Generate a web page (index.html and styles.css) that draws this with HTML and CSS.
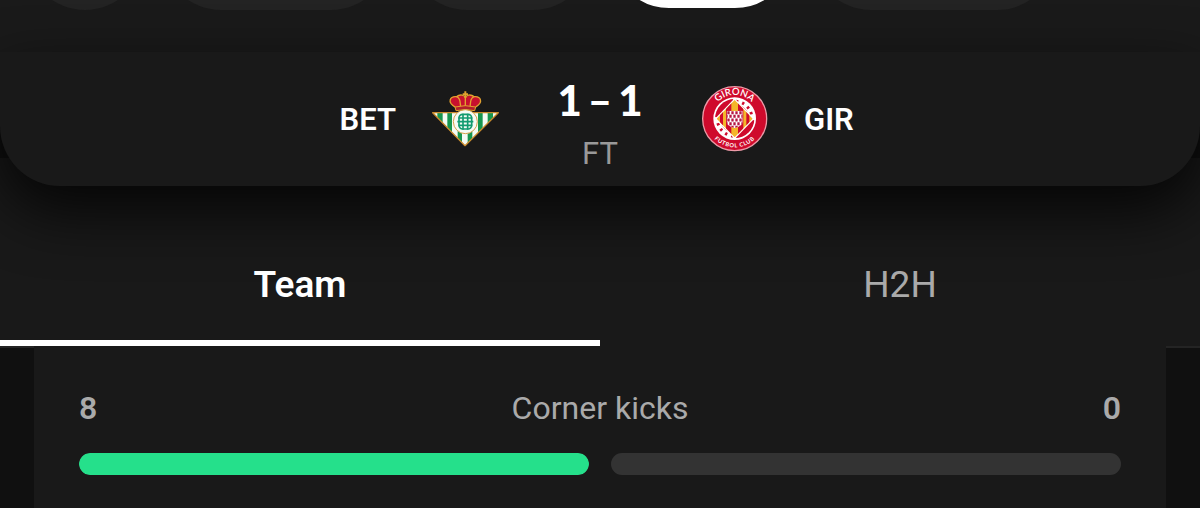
FILE: index.html
```html
<!DOCTYPE html>
<html lang="en">
<head>
    <meta charset="utf-8">
    <title>BET 1 - 1 GIR</title>
    <link rel="stylesheet" href="styles.css">
</head>
<body>
    <nav class="pills">
        <button type="button" class="pill pill-round" aria-label="Back"></button>
        <button type="button" class="pill pill-large" aria-label="Overview"></button>
        <button type="button" class="pill" aria-label="Lineups"></button>
        <button type="button" class="pill active" aria-label="Stats"></button>
        <button type="button" class="pill pill-wide" aria-label="Standings"></button>
    </nav>

    <header class="scoreboard">
        <div class="team home">
            <span>BET</span>
            <svg class="crest" viewBox="33 18 204 204" aria-hidden="true">
                <defs>
                    <clipPath id="shield"><path d="M37 100H236L135 201Z"/></clipPath>
                </defs>
                <g clip-path="url(#shield)">
                    <path fill="#f4fbf4" d="M33 98H240V204H33Z"/>
                    <path fill="#15964f" d="M52 98h16v110H52zM82 98h14v110H82zM113 98h13v110h-13zM143 98h14v110h-14zM174 98h14v110h-14zM203 98h16v110h-16z"/>
                </g>
                <path fill="none" stroke="#c98a2c" stroke-width="4" stroke-linejoin="round" d="M38 101H235L135 200Z"/>
                <path fill="#c8102e" d="M104 85C82 66 92 52 109 52C120 46 130 50 136 57C142 50 152 46 163 52C180 52 190 66 168 85Z"/>
                <path fill="none" stroke="#e2a12f" stroke-width="4" d="M105 84C80 68 91 52 108 53C122 56 120 70 122 84M167 84C192 68 181 52 164 53C150 56 152 70 150 84M109 53C121 44 134 48 136 57C138 48 151 44 163 53M136 57V83"/>
                <path fill="#e2a12f" d="M133 37h6v6h5v5h-5v8h-6v-8h-5v-5h5z"/>
                <path fill="#b21e2b" stroke="#e2a12f" stroke-width="3" d="M105 84Q136 76 167 84L164 95Q136 88 108 95Z"/>
                <circle cx="136" cy="128" r="36" fill="#f5fbf4" stroke="#d6a24b" stroke-width="3"/>
                <g fill="none" stroke="#129b70" stroke-width="5">
                    <path d="M129 104V152M143 104V152M112 128H160M115 117H157M115 139H157"/>
                    <rect x="117" y="106" width="38" height="44" rx="11"/>
                </g>
            </svg>
        </div>
        <div class="result">
            <strong class="score"><span>1</span><span>–</span><span>1</span></strong>
            <span class="status">FT</span>
        </div>
        <div class="team away">
            <svg class="crest" viewBox="33 33 204 204" aria-hidden="true">
                <defs>
                    <path id="arcTop" d="M63 134A71 71 0 0 1 205 134"/>
                    <path id="arcBottom" d="M48 134A86 86 0 0 0 220 134"/>
                    <clipPath id="diamond"><path d="M134 78L188 134L134 190L80 134Z"/></clipPath>
                    <clipPath id="core"><path d="M110 110H158V144Q157 156 134 162Q111 156 110 144Z"/></clipPath>
                </defs>
                <circle cx="134" cy="134" r="96" fill="#cf0a2c" stroke="#ec9aa7" stroke-width="4"/>
                <circle cx="134" cy="134" r="64" fill="#fff"/>
                <circle cx="134" cy="134" r="59" fill="#cf0a2c"/>
                <path fill="none" stroke="#fff" stroke-width="18" d="M130 82A52 52 0 0 1 186 138M138 186A52 52 0 0 1 82 130"/>
                <path fill="none" stroke="#cf0a2c" stroke-width="9" stroke-dasharray="7 12" d="M138 82A52 52 0 0 1 186 134M130 186A52 52 0 0 1 82 134"/>
                <path fill="#fff" d="M134 73L193 134L134 195L75 134Z"/>
                <g clip-path="url(#diamond)">
                    <path fill="#f4b52a" d="M78 70H192V200H78Z"/>
                    <path fill="#cf0a2c" d="M90 70h9v130h-9zM108 70h16v130h-16zM144 70h16v130h-16zM169 70h9v130h-9z"/>
                </g>
                <g clip-path="url(#core)">
                    <path fill="#fff" d="M106 108H162V166H106Z"/>
                    <path fill="none" stroke="#b41743" stroke-width="9" stroke-dasharray="7 5" d="M112 116H160M106 127H160M112 138H160M106 149H160M112 160H160"/>
                </g>
                <text class="crest-name" text-anchor="middle"><textPath href="#arcTop" startOffset="50%">GIRONA</textPath></text>
                <text class="crest-club" text-anchor="middle"><textPath href="#arcBottom" startOffset="50%">FUTBOL CLUB</textPath></text>
            </svg>
            <span>GIR</span>
        </div>
    </header>

    <main>
        <div class="tabs" role="tablist">
            <button type="button" class="tab selected" role="tab" aria-selected="true">Team</button>
            <button type="button" class="tab" role="tab" aria-selected="false">H2H</button>
        </div>

        <section class="panel">
            <div class="stat-row">
                <strong>8</strong>
                <span>Corner kicks</span>
                <strong class="right">0</strong>
            </div>
            <div class="bars">
                <div class="bar"><div class="fill" style="width: 100%"></div></div>
                <div class="bar"><div class="fill" style="width: 0%"></div></div>
            </div>
        </section>
    </main>
</body>
</html>
```
FILE: styles.css
```css
* {
    box-sizing: border-box;
}
body {
    margin: 0;
    min-height: 100vh;
    display: flex;
    flex-direction: column;
    font-family: Roboto, Arial, sans-serif;
    background-color: #101010;
    color: #fff;
}
button {
    border: none;
    padding: 0;
    font-family: inherit;
    cursor: pointer;
}

/* top navigation, scrolled mostly out of view */
.pills {
    display: flex;
    align-items: flex-end;
    gap: 18px;
    height: 52px;
    padding: 0 26px 42px;
    overflow: hidden;
    background-color: #1a1a1a;
}
.pill {
    flex: none;
    width: 184px;
    height: 118px;
    border-radius: 59px;
    background-color: #232323;
}
.pill-round {
    width: 118px;
}
.pill-large {
    width: 228px;
}
.pill-wide {
    width: 244px;
}
.pill.active {
    background-color: #fff;
    border: 2px solid #1a1a1a;
}

.scoreboard {
    position: relative;
    z-index: 1;
    display: grid;
    grid-template-columns: 1fr 202px 1fr;
    align-items: center;
    margin-bottom: -28px;
    background-color: #191919;
    border-radius: 0 0 60px 60px;
    box-shadow: 0 24px 60px rgba(0, 0, 0, 0.8);
}
.team {
    display: flex;
    align-items: center;
    gap: 35px;
    font-size: 31px;
    font-weight: 600;
}
.home {
    justify-content: flex-end;
}
.crest {
    width: 68px;
    height: 68px;
}
.crest-name,
.crest-club {
    font-family: Lato, Arial, sans-serif;
    fill: #fff;
}
.crest-name {
    font-size: 29px;
    font-weight: 600;
}
.crest-club {
    font-size: 17px;
    font-weight: 700;
    letter-spacing: 2px;
}
.result {
    display: flex;
    flex-direction: column;
    align-items: center;
    padding: 22px 0 6px;
    line-height: 53px;
}
.score {
    display: flex;
    gap: 6px;
    font-family: Lato, Arial, sans-serif;
    font-size: 42px;
    font-weight: 900;
}
.status {
    font-size: 31px;
    color: #999;
}

main {
    flex: 1;
    display: flex;
    flex-direction: column;
}
.tabs {
    display: flex;
    padding-top: 70px;
    background-color: #191919;
    border-bottom: 2px solid #242424;
}
.tab {
    flex: 1;
    height: 118px;
    border-bottom: 6px solid transparent;
    background: none;
    font-size: 37px;
    color: #aaa;
}
.tab.selected {
    border-bottom-color: #fff;
    font-weight: 600;
    color: #fff;
}

.panel {
    flex: 1;
    margin: -2px 34px 0;
    padding: 42px 45px 32px;
    background-color: #191919;
}
.stat-row {
    display: grid;
    grid-template-columns: 1fr auto 1fr;
    line-height: 40px;
    font-size: 32px;
    color: #aaa;
}
.stat-row strong {
    font-weight: 600;
}
.stat-row .right {
    text-align: right;
}
.bars {
    display: flex;
    gap: 22px;
    margin-top: 25px;
}
.bar {
    flex: 1;
    height: 22px;
    border-radius: 11px;
    overflow: hidden;
    background-color: #333;
}
.fill {
    height: 100%;
    border-radius: 11px;
    background-color: #25e08b;
}
```
